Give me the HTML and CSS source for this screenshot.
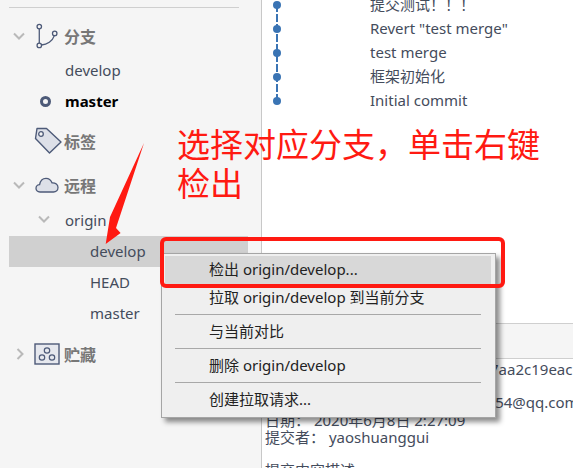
FILE: index.html
```html
<!DOCTYPE html>
<html lang="zh-CN">
<head>
  <meta charset="UTF-8" />
  <title>分支检出</title>
  <link rel="stylesheet" href="styles.css">
</head>
<body>

<div class="app">
  <!-- Left: branch tree -->
  <div class="sidebar">
    <div class="top-line"></div>

    <div class="group-row branches">
      <svg class="chevron" viewBox="0 0 12 8"><path d="M1 1.5 L6 6.5 L11 1.5" /></svg>
      <svg class="group-icon" viewBox="0 0 28 28">
        <g fill="none" stroke="#4d5a78" stroke-width="1.5">
          <circle cx="5" cy="3" r="2.6" /><circle cx="5" cy="25" r="2.6" /><circle cx="23" cy="11" r="2.6" />
          <path d="M5 5.6 V22.4 M7.6 24.5 C14 24 20.5 20 22.6 13.6" />
        </g>
      </svg>
      <span class="group-name">分支</span>
    </div>
    <div class="item depth1 first">develop</div>
    <div class="item depth1 current"><span class="head-dot"></span>master</div>

    <div class="group-row tags">
      <span class="chevron-gap"></span>
      <svg class="group-icon" viewBox="0 0 28 28">
        <path d="M3 1.5 H12.5 L27 15 L15.5 26 L1.5 11.5 Z" fill="#dde0e8" stroke="#4d5a78" stroke-width="1.4" stroke-linejoin="round" />
        <circle cx="7" cy="7" r="2.3" fill="#f5f5f5" stroke="#4d5a78" stroke-width="1.3" />
      </svg>
      <span class="group-name">标签</span>
    </div>

    <div class="group-row remotes">
      <svg class="chevron" viewBox="0 0 12 8"><path d="M1 1.5 L6 6.5 L11 1.5" /></svg>
      <svg class="group-icon" viewBox="0 0 24 16">
        <path d="M5 15 C2.4 15 1 13.2 1 11.3 C1 9.2 2.6 7.7 4.6 7.7 C5.2 4 7.6 1.3 11 1.3 C14 1.3 16 3.2 17 5.8 C20.6 5.6 23 7.6 23 10.6 C23 13.2 21 15 18.5 15 Z" fill="#dde0e8" stroke="#4d5a78" stroke-width="1.3" />
      </svg>
      <span class="group-name">远程</span>
    </div>
    <div class="item depth1 origin">
      <svg class="chevron small" viewBox="0 0 12 8"><path d="M1 1.5 L6 6.5 L11 1.5" /></svg>origin
    </div>
    <div class="item depth2 selected">develop</div>
    <div class="item depth2">HEAD</div>
    <div class="item depth2">master</div>

    <div class="group-row stashes">
      <svg class="chevron closed" viewBox="0 0 8 12"><path d="M1.5 1 L6.5 6 L1.5 11" /></svg>
      <svg class="group-icon" viewBox="0 0 26 22">
        <rect x="1" y="1" width="24" height="20" fill="#e6e8ee" stroke="#4d5a78" stroke-width="1.4" />
        <g fill="none" stroke="#4d5a78" stroke-width="1.2">
          <circle cx="13" cy="7.5" r="2.7" /><circle cx="8" cy="14.5" r="2.7" /><circle cx="18" cy="14.5" r="2.7" />
        </g>
      </svg>
      <span class="group-name">贮藏</span>
    </div>
  </div>

  <!-- Right: commit log and details -->
  <div class="main">
    <div class="commits">
      <svg class="graph" viewBox="0 0 16 108" width="16" height="108">
        <path d="M8 4 V101" stroke="#3a74b4" stroke-width="2" stroke-dasharray="8 2" />
        <circle cx="8" cy="5" r="4" fill="#3a74b4" /><circle cx="8" cy="29" r="4" fill="#3a74b4" />
        <circle cx="8" cy="53" r="4" fill="#3a74b4" /><circle cx="8" cy="77" r="4" fill="#3a74b4" />
        <circle cx="8" cy="101" r="4" fill="#3a74b4" />
      </svg>
      <div class="messages">
        <div class="msg">提交测试&#xFF01;&#xFF01;&#xFF01;</div>
        <div class="msg">Revert "test merge"</div>
        <div class="msg">test merge</div>
        <div class="msg">框架初始化</div>
        <div class="msg">Initial commit</div>
      </div>
    </div>
    <div class="detail-bar"></div>
    <div class="details">
      <div class="sha">提交&#xFF1A; 0a1b2c3d4e5f6a7b8c9d67aa2c19eac</div>
      <div class="mail">作者&#xFF1A; yaoshuanggui &lt;1234567654@qq.com</div>
      <div class="date">日期&#xFF1A; 2020年6月8日 2:27:09</div>
      <div class="committer">提交者&#xFF1A; yaoshuanggui</div>
      <div class="desc">提交内容描述</div>
    </div>
  </div>
</div>

<!-- Annotations and context menu lie over the app -->
<div class="note">选择对应分支&#xFF0C;单击右键<br>检出</div>

<svg class="arrow" viewBox="0 0 50 110" width="50" height="110">
  <path d="M44 3 L16 88 L20.6 93 L5.7 104 L10 77 Z" fill="#ff1a12" />
</svg>

<div class="menu">
  <div class="menu-item active">检出 origin/develop...</div>
  <div class="menu-item">拉取 origin/develop 到当前分支</div>
  <div class="menu-sep"></div>
  <div class="menu-item">与当前对比</div>
  <div class="menu-sep"></div>
  <div class="menu-item">删除 origin/develop</div>
  <div class="menu-sep"></div>
  <div class="menu-item">创建拉取请求...</div>
</div>

<div class="red-box"></div>

</body>
</html>
```

FILE: styles.css
```css
body {
  margin: 0;
  width: 573px;
  height: 468px;
  overflow: hidden;
  position: relative;
  background: #fff;
  font-family: "Noto Sans", "Noto Sans CJK SC", sans-serif;
  font-size: 15px;
  color: #444c5c;
}
.app {
  display: flex;
  height: 468px;
}
.sidebar {
  width: 262px;
  flex: none;
  box-sizing: border-box;
  background: #f5f5f5;
  border-right: 1px solid #c8c8c8;
  padding-top: 7px;
}
.top-line {
  height: 1px;
  width: 230px;
  margin-left: 9px;
  background: #cfcfcf;
}
.group-row {
  display: flex;
  align-items: center;
  height: 32px;
  font-weight: bold;
  color: #777;
  font-size: 16px;
}
.branches { margin-top: 12px; }
.tags { margin-top: 7px; height: 34px; }
.remotes { margin-top: 11px; }
.stashes { margin-top: 9px; }
.chevron {
  width: 12px;
  height: 8px;
  margin-left: 13px;
  margin-right: 10px;
  flex: none;
  fill: none;
  stroke: #b9b9b9;
  stroke-width: 2;
}
.chevron.closed {
  width: 8px;
  height: 12px;
  margin-left: 16px;
  margin-right: 10px;
}
.chevron.small {
  margin-left: 0;
  margin-right: 9px;
  position: absolute;
  left: 38px;
  top: 10px;
}
.chevron-gap {
  width: 34px;
  flex: none;
}
.group-icon {
  width: 28px;
  height: 28px;
  flex: none;
  margin-right: 2px;
}
.branches .group-icon { width: 24px; margin-left: 0; margin-right: 5px; }
.remotes .group-icon { width: 24px; height: 16px; margin-left: 0; margin-right: 5px; }
.stashes .group-icon { width: 26px; height: 22px; margin-right: 4px; }
.item {
  height: 31px;
  line-height: 30px;
  position: relative;
}
.depth1 { padding-left: 65px; }
.depth2 { padding-left: 90px; }
.first { margin-top: 3px; }
.current {
  font-weight: bold;
  color: #000;
}
.head-dot {
  position: absolute;
  left: 40px;
  top: 10px;
  width: 5px;
  height: 5px;
  border: 3px solid #4d5a78;
  border-radius: 50%;
}
.origin { margin-top: 4px; }
.selected {
  background: #d0d0d0;
  margin-left: 9px;
  padding-left: 81px;
  width: 239px;
  box-sizing: border-box;
}
.main {
  flex: 1;
  display: flex;
  flex-direction: column;
  min-width: 0;
}
.commits {
  height: 323px;
  flex: none;
  display: flex;
  box-sizing: border-box;
  padding-left: 7px;
}
.graph {
  flex: none;
}
.messages {
  margin-left: 85px;
  margin-top: -8px;
}
.msg {
  height: 24px;
  line-height: 24px;
  white-space: nowrap;
}
.detail-bar {
  height: 36px;
  flex: none;
  box-sizing: border-box;
  background: #f5f5f5;
  border-top: 1px solid #cfcfcf;
  border-bottom: 1px solid #cfcfcf;
}
.details {
  padding-left: 3px;
  white-space: nowrap;
  line-height: 17px;
}
.sha { height: 33px; line-height: 20px; }
.mail { height: 20px; line-height: 20px; }
.date { height: 17px; }
.committer { height: 17px; }
.desc { margin-top: 16px; }
.note {
  position: absolute;
  left: 177px;
  top: 124px;
  font-family: "Noto Sans CJK SC", sans-serif;
  font-size: 33px;
  line-height: 39px;
  color: #ff1a12;
  white-space: nowrap;
}
.arrow {
  position: absolute;
  left: 100px;
  top: 140px;
}
.menu {
  position: absolute;
  left: 161px;
  top: 253px;
  width: 335px;
  height: 165px;
  box-sizing: border-box;
  padding: 2px 14px 0 3px;
  background: #efefef;
  border: 1px solid #a5a5a5;
  box-shadow: 4px 4px 5px rgba(0, 0, 0, 0.45);
  color: #222;
}
.menu-item {
  height: 28px;
  line-height: 26px;
  padding-left: 44px;
  white-space: nowrap;
  margin-right: -10px;
}
.menu-item.active {
  background: #d8d8d8;
}
.menu-sep {
  height: 1px;
  background: #a8a8a8;
  margin: 2px 0 3px 10px;
}
.red-box {
  position: absolute;
  left: 160px;
  top: 237px;
  width: 345px;
  height: 51px;
  box-sizing: border-box;
  border: 4px solid #ff1a12;
  border-radius: 6px;
}
```
